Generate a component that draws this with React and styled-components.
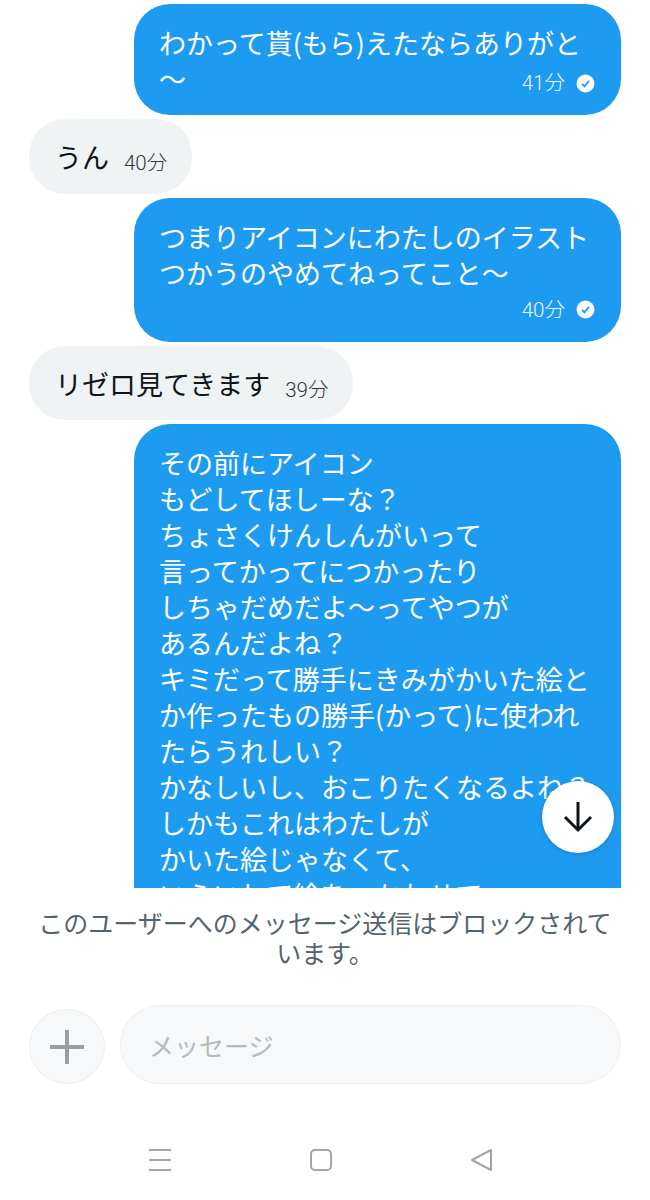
import React from "react";
import styled, { createGlobalStyle } from "styled-components";

const Global = createGlobalStyle`
  html, body { margin: 0; padding: 0; background: #fff; }
  body { font-family: "Noto Sans CJK JP", "Noto Sans", sans-serif; }
`;

const Screen = styled.div`
  width: 650px;
  height: 1200px;
  display: flex;
  flex-direction: column;
  overflow: hidden;
  background: #fff;
`;

const ChatArea = styled.div`
  position: relative;
  height: 888px;
  flex: none;
`;

const MessageList = styled.div`
  height: 100%;
  box-sizing: border-box;
  overflow: hidden;
  padding: 4px 29px 0;
  display: flex;
  flex-direction: column;
  gap: 4px;
`;

const Outgoing = styled.div`
  flex: none;
  width: 487px;
  box-sizing: border-box;
  align-self: flex-end;
  background: #1d9bf0;
  color: #fff;
  border-radius: 36px;
  padding: 21px 26px 18px 25px;
  font-size: 27px;
  line-height: 36px;
`;

const Incoming = styled.div`
  flex: none;
  align-self: flex-start;
  display: flex;
  align-items: flex-end;
  gap: 15px;
  background: #eff3f4;
  color: #0f1419;
  border-radius: 36px;
  padding: 20px 25px 18.5px 26px;
  font-size: 27px;
  line-height: 36px;
`;

const Line = styled.div`
  white-space: nowrap;
`;

const FootRow = styled.div`
  display: flex;
  justify-content: space-between;
  align-items: flex-end;
  min-height: 33px;
`;

const Meta = styled.span`
  display: inline-flex;
  align-items: center;
  gap: 11px;
  font-family: Roboto, "Noto Sans CJK JP", sans-serif;
  font-size: 20.5px;
  font-weight: 300;
  line-height: 28px;
  margin-bottom: ${(p) => (p.$out ? "0" : "-2px")};
  color: ${(p) => (p.$out ? "#eef7fe" : "#2f383e")};
`;

const SeenIcon = styled.svg`
  width: 19px;
  height: 19px;
  display: block;
`;

const ScrollDown = styled.button`
  position: absolute;
  left: 542px;
  top: 781px;
  width: 72px;
  height: 72px;
  padding: 0;
  border: none;
  border-radius: 50%;
  background: #fff;
  box-shadow: 0 1px 4px rgba(0, 0, 0, 0.18);
  display: flex;
  align-items: center;
  justify-content: center;
`;

const Notice = styled.p`
  margin: 0;
  padding: 19px 30px 0;
  text-align: center;
  font-size: 25px;
  line-height: 30px;
  color: #536471;
`;

const Composer = styled.div`
  display: flex;
  align-items: flex-start;
  gap: 15px;
  padding: 38px 29px 0;
`;

const PlusButton = styled.div`
  width: 76px;
  height: 75px;
  flex: none;
  box-sizing: border-box;
  border-radius: 50%;
  background: #f6f8fa;
  border: 1px solid #eceff0;
  display: flex;
  align-items: center;
  justify-content: center;
  margin-top: 4px;
`;

const Input = styled.div`
  flex: 1;
  height: 79px;
  box-sizing: border-box;
  border-radius: 40px;
  background: #f6f8fa;
  border: 1px solid #eceff0;
  display: flex;
  align-items: center;
  padding-left: 28px;
  font-size: 25px;
  color: #b4babf;
`;

const NavBar = styled.div`
  margin-top: 64px;
  padding-right: 8px;
  display: flex;
  justify-content: center;
  align-items: center;
  gap: 137px;
`;

const lines = [
  "その前にアイコン",
  "もどしてほしーな？",
  "ちょさくけんしんがいって",
  "言ってかってにつかったり",
  "しちゃだめだよ〜ってやつが",
  "あるんだよね？",
  "キミだって勝手にきみがかいた絵と",
  "か作ったもの勝手(かって)に使われ",
  "たらうれしい？",
  "かなしいし、おこりたくなるよね？",
  "しかもこれはわたしが",
  "かいた絵じゃなくて、",
  "いらいして絵をつかわせて",
];

const Seen = () => (
  <SeenIcon viewBox="0 0 19 19">
    <circle cx="9.5" cy="9.5" r="9" fill="#fff" />
    <path d="M6 9.8l2.5 2.6L13 6.8" fill="none" stroke="#1d9bf0" strokeWidth="1.8" />
  </SeenIcon>
);

export default function App() {
  return (
    <Screen>
      <Global />
      <ChatArea>
        <MessageList>
          <Outgoing>
            <Line>わかって貰(もら)えたならありがと</Line>
            <FootRow>
              <span>〜</span>
              <Meta $out>41分<Seen /></Meta>
            </FootRow>
          </Outgoing>
          <Incoming>
            <span>うん</span>
            <Meta>40分</Meta>
          </Incoming>
          <Outgoing>
            <Line>つまりアイコンにわたしのイラスト</Line>
            <Line>つかうのやめてねってこと〜</Line>
            <FootRow>
              <span />
              <Meta $out>40分<Seen /></Meta>
            </FootRow>
          </Outgoing>
          <Incoming>
            <span>リゼロ見てきます</span>
            <Meta>39分</Meta>
          </Incoming>
          <Outgoing>
            {lines.map((l) => (
              <Line key={l}>{l}</Line>
            ))}
          </Outgoing>
        </MessageList>
        <ScrollDown aria-label="scroll to bottom">
          <svg width="30" height="32" viewBox="0 0 30 32" fill="none" stroke="#0f1419" strokeWidth="3">
            <path d="M15 1v28" />
            <path d="M2 16l13 13 13-13" />
          </svg>
        </ScrollDown>
      </ChatArea>
      <Notice>このユーザーへのメッセージ送信はブロックされています。</Notice>
      <Composer>
        <PlusButton>
          <svg width="34" height="34" viewBox="0 0 34 34" stroke="#9b9ea1" strokeWidth="4">
            <path d="M17 0v34M0 17h34" />
          </svg>
        </PlusButton>
        <Input>メッセージ</Input>
      </Composer>
      <NavBar>
        <svg width="24" height="24" viewBox="0 0 24 24" stroke="#a4a4a4" strokeWidth="2">
          <path d="M1 2h22M1 12h22M1 22h22" />
        </svg>
        <svg width="24" height="24" viewBox="0 0 24 24" fill="none" stroke="#a4a4a4" strokeWidth="2">
          <rect x="2" y="2" width="20" height="20" rx="4" />
        </svg>
        <svg width="24" height="24" viewBox="0 0 24 24" fill="none" stroke="#a4a4a4" strokeWidth="2" strokeLinejoin="round">
          <path d="M21 2v20L2 12z" />
        </svg>
      </NavBar>
    </Screen>
  );
}
